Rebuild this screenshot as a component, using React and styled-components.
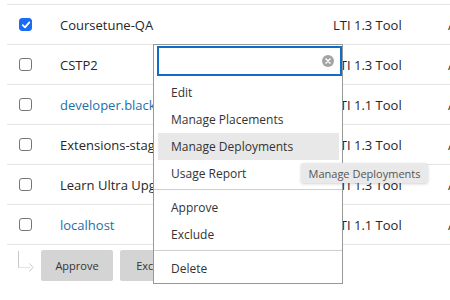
import React from "react";
import styled, { createGlobalStyle } from "styled-components";

const GlobalStyle = createGlobalStyle`
  html, body { margin: 0; padding: 0; background: #fff; overflow: hidden; }
  body { font-family: "Open Sans", "Liberation Sans", sans-serif; color: #262626; }
  * { box-sizing: border-box; }
`;

const Page = styled.div`
  position: relative;
  width: 450px;
  height: 300px;
  overflow: hidden;
  padding-top: 4px;
`;

const Table = styled.div`
  margin-left: 7px;
  width: 620px;
  border-bottom: 1px solid #e6e6e6;
`;

const Row = styled.div`
  display: grid;
  grid-template-columns: 53px 273px 115px 1fr;
  align-items: center;
  height: 40px;
  border-top: 1px solid #e6e6e6;
  font-size: 13px;
`;

const CheckCell = styled.div`
  padding-left: 12px;
  display: flex;
  align-items: center;
`;

const Box = styled.span`
  width: 13px;
  height: 13px;
  border-radius: 3px;
  border: 1px solid ${(p) => (p.$checked ? "#1a6cf2" : "#767676")};
  background: ${(p) => (p.$checked ? "#1a6cf2" : "#fff")};
  display: flex;
  align-items: center;
  justify-content: center;
`;

const NameCell = styled.div`
  white-space: nowrap;
  overflow: hidden;
  color: ${(p) => (p.$link ? "#1f6ea6" : "#262626")};
`;

const TextCell = styled.div`
  white-space: nowrap;
`;

const ActionBar = styled.div`
  display: flex;
  align-items: center;
  padding: 5px 0 0 16px;
`;

const Arrow = styled.svg`
  width: 20px;
  height: 24px;
  margin-top: -8px;
  margin-right: 5px;
`;

const Button = styled.button`
  height: 31px;
  width: 72px;
  padding: 0;
  margin-right: 7px;
  border: none;
  border-radius: 2px;
  background: #d4d4d4;
  color: #333;
  font-family: inherit;
  font-size: 11px;
  text-align: center;
`;

const Menu = styled.div`
  position: absolute;
  left: 153px;
  top: 44px;
  width: 190px;
  height: 240px;
  background: #fff;
  border: 1px solid #999;
  padding: 1px 0 2px 0;
`;

const SearchWrap = styled.div`
  position: relative;
  margin-left: 3px;
  width: 185px;
`;

const Search = styled.input`
  display: block;
  width: 100%;
  height: 30px;
  border: 2px solid #0f6dc6;
  outline: none;
  font-family: inherit;
  font-size: 12px;
  padding: 0 24px 0 6px;
`;

const Clear = styled.svg`
  position: absolute;
  right: 8px;
  top: 9px;
  width: 12px;
  height: 12px;
`;

const Items = styled.div`
  margin-top: 3px;
`;

const Item = styled.div`
  height: 27px;
  margin: 0 3px 0 4px;
  padding-left: 13px;
  display: flex;
  align-items: center;
  font-size: 12px;
  color: #333;
  background: ${(p) => (p.$active ? "#e8e8e8" : "transparent")};
`;

const Sep = styled.div`
  height: 1px;
  background: #cfcfcf;
  margin: 2px 0 4px;
`;

const Tooltip = styled.div`
  position: absolute;
  left: 301px;
  top: 163px;
  width: 127px;
  height: 20px;
  display: flex;
  align-items: center;
  justify-content: center;
  background: #e9e9e9;
  border-radius: 3px;
  box-shadow: 0 1px 3px rgba(0, 0, 0, 0.18);
  font-size: 11px;
  color: #555;
  white-space: nowrap;
`;

const rows = [
  { name: "Coursetune-QA", type: "LTI 1.3 Tool", checked: true },
  { name: "CSTP2", type: "LTI 1.3 Tool" },
  { name: "developer.blackboard.com", type: "LTI 1.1 Tool", link: true },
  { name: "Extensions-staging", type: "LTI 1.3 Tool" },
  { name: "Learn Ultra Upgrade", type: "LTI 1.3 Tool" },
  { name: "localhost", type: "LTI 1.1 Tool", link: true },
];

function Check({ checked }) {
  return (
    <Box $checked={checked}>
      {checked && (
        <svg width="10" height="10" viewBox="0 0 10 10">
          <path d="M1.8 5.2 L4 7.4 L8.3 2.4" fill="none" stroke="#fff" strokeWidth="1.8" strokeLinecap="round" strokeLinejoin="round" />
        </svg>
      )}
    </Box>
  );
}

export default function App() {
  return (
    <>
      <GlobalStyle />
      <Page>
        <Table>
          {rows.map((r) => (
            <Row key={r.name}>
              <CheckCell>
                <Check checked={r.checked} />
              </CheckCell>
              <NameCell $link={r.link}>{r.name}</NameCell>
              <TextCell>{r.type}</TextCell>
              <TextCell>Approved</TextCell>
            </Row>
          ))}
        </Table>
        <ActionBar>
          <Arrow viewBox="0 0 20 24">
            <path d="M2.5 1 V17.5" stroke="#c8c8c8" strokeWidth="1" fill="none" />
            <path d="M2.5 17.5 H14" stroke="#c8c8c8" strokeWidth="1" strokeDasharray="1 1" fill="none" />
            <path d="M13.5 13.5 L17 17.5 L13.5 21.5" stroke="#c8c8c8" strokeWidth="1" fill="none" />
          </Arrow>
          <Button>Approve</Button>
          <Button>Exclude</Button>
        </ActionBar>
        <Menu>
          <SearchWrap>
            <Search type="text" aria-label="Filter" />
            <Clear viewBox="0 0 12 12">
              <circle cx="6" cy="6" r="6" fill="#a3a3a3" />
              <path d="M4 4 L8 8 M8 4 L4 8" stroke="#fff" strokeWidth="1.6" strokeLinecap="round" />
            </Clear>
          </SearchWrap>
          <Items>
            <Item>Edit</Item>
            <Item>Manage Placements</Item>
            <Item $active>Manage Deployments</Item>
            <Item>Usage Report</Item>
            <Sep />
            <Item>Approve</Item>
            <Item>Exclude</Item>
            <Sep />
            <Item>Delete</Item>
          </Items>
        </Menu>
        <Tooltip>Manage Deployments</Tooltip>
      </Page>
    </>
  );
}
